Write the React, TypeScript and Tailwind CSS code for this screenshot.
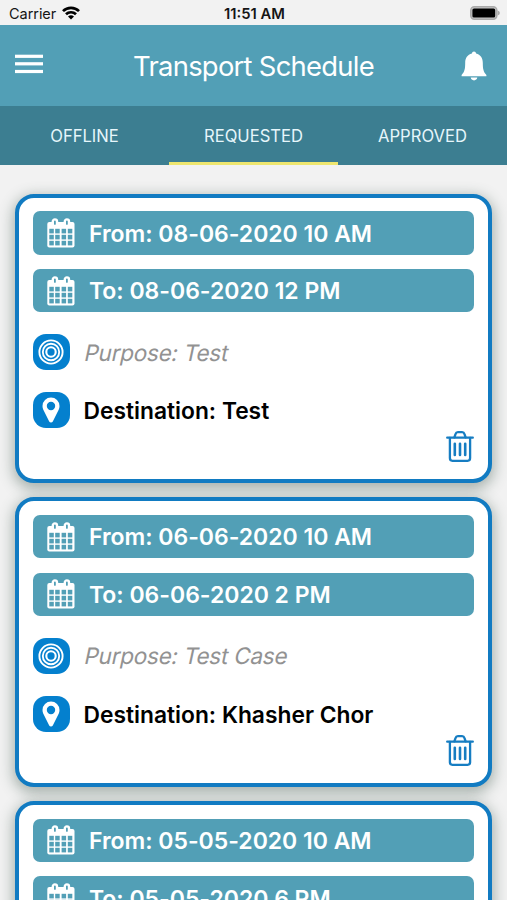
import { ReactNode } from "react";

interface Trip {
  id: number;
  from: string;
  to: string;
  purpose: string;
  destination: string;
}

const trips: Trip[] = [
  { id: 1, from: "08-06-2020 10 AM", to: "08-06-2020 12 PM", purpose: "Test", destination: "Test" },
  { id: 2, from: "06-06-2020 10 AM", to: "06-06-2020 2 PM", purpose: "Test Case", destination: "Khasher Chor" },
  { id: 3, from: "05-05-2020 10 AM", to: "05-05-2020 6 PM", purpose: "Test", destination: "Test" },
];

const tabs = ["OFFLINE", "REQUESTED", "APPROVED"];

function CalendarIcon() {
  return (
    <svg viewBox="0 0 28 30" className="h-[30px] w-7 shrink-0">
      <rect x="0.3" y="4" width="27.2" height="25.4" rx="2" fill="#fff" />
      {[10.8, 16.8, 22.8].map(y =>
        [2.3, 8.2, 14.6, 20.8].map(x => (
          <rect key={`${y}-${x}`} x={x} y={y} width="4.5" height="4.6" fill="#529fb6" />
        ))
      )}
      <rect x="5.8" y="1.4" width="4.2" height="6.6" rx="2.1" fill="#529fb6" stroke="#fff" strokeWidth="2.4" />
      <rect x="17.8" y="1.4" width="4.2" height="6.6" rx="2.1" fill="#529fb6" stroke="#fff" strokeWidth="2.4" />
    </svg>
  );
}

function TargetIcon() {
  return (
    <svg viewBox="0 0 26 26" className="size-[26px]" fill="none" stroke="#fff">
      <circle cx="13" cy="13" r="11.6" strokeWidth="1.9" />
      <circle cx="13" cy="13" r="8.2" strokeWidth="1.9" />
      <circle cx="13" cy="13" r="4.7" strokeWidth="2.1" />
    </svg>
  );
}

function PinIcon() {
  return (
    <svg viewBox="0 0 18 26" className="h-[26px] w-[18px]" fill="#fff">
      <path
        fillRule="evenodd"
        d="M9 .5a8.5 8.5 0 0 0-8.5 8.5c0 1.3.2 2.4.7 3.4l6 12a2 2 0 0 0 3.6 0l6-12c.5-1 .7-2.1.7-3.4A8.5 8.5 0 0 0 9 .5Zm0 4.3a4.2 4.2 0 1 1 0 8.4 4.2 4.2 0 0 1 0-8.4Z"
      />
    </svg>
  );
}

function TrashIcon() {
  return (
    <svg
      viewBox="0 0 28 31"
      className="h-[31px] w-7"
      fill="none"
      stroke="#167dc2"
      strokeWidth="2.3"
      strokeLinecap="round"
      strokeLinejoin="round"
    >
      <path d="M1.2 6.7h25.6" />
      <path d="M8.4 6.4 9.4 3.3Q10.1 1.2 11.9 1.2h4.2q1.8 0 2.5 2.1l1 3.1" />
      <path d="M3.9 7v20.1q0 2.7 2.5 2.7h15.2q2.5 0 2.5-2.7V7" />
      <path d="M8.8 12.8v11.2M14 12.8v11.2M19.2 12.8v11.2" strokeWidth="2.6" />
    </svg>
  );
}

function StatusBar() {
  return (
    <div className="flex h-[25px] items-center justify-between bg-[#f2f2f2] pt-[3px] pr-[7px] pl-[9px] text-[#151515]">
      <div className="flex flex-1 items-center gap-[6px]">
        <span className="text-[14.5px] tracking-[-0.05px]">Carrier</span>
        <svg viewBox="0 0 18 14" className="mb-[2px] h-[14px] w-[18px]" fill="none" stroke="#000" strokeWidth="2.7">
          <path d="M1 5.1a11.4 11.4 0 0 1 16 0" />
          <path d="M4 8.3a7.1 7.1 0 0 1 10 0" />
          <path d="M9 13.6 6 10.6a4.3 4.3 0 0 1 6 0Z" fill="#000" stroke="none" />
        </svg>
      </div>
      <span className="text-[14.8px] font-semibold">11:51 AM</span>
      <div className="flex flex-1 justify-end">
        <svg viewBox="0 0 30 14" className="mb-[3px] h-[14px] w-[30px]">
          <rect x="0.8" y="0.8" width="26" height="12.4" rx="3.6" fill="#c9c9c9" stroke="#aaa" strokeWidth="1.6" />
          <rect x="2.4" y="2.4" width="22.8" height="9.2" rx="1.6" fill="#000" />
          <path d="M27.7 4.4q2.2.9 2.2 2.6t-2.2 2.6Z" fill="#aaa" />
        </svg>
      </div>
    </div>
  );
}

function Header() {
  return (
    <header className="flex h-[81px] items-center justify-between bg-[#529fb6] pr-5 pl-[15px] text-white">
      <svg viewBox="0 0 28 20" className="mb-[3px] h-5 w-7" fill="#fff">
        <rect y="0.7" width="28" height="3.2" />
        <rect y="8.2" width="28" height="3.2" />
        <rect y="15.9" width="28" height="3.2" />
      </svg>
      <h1 className="pt-[2px] pl-[3px] text-[27.4px] tracking-[-0.73px]">Transport Schedule</h1>
      <svg viewBox="0 0 26 30" className="h-[30px] w-[26px]" fill="#fff">
        <path d="M13 .6c1.2 0 1.9.8 2.1 2 4.4 1 6.7 4.7 6.7 9.2 0 6.4.7 9.2 3.6 12.1v1.4H.6v-1.4c2.9-2.9 3.6-5.7 3.6-12.1 0-4.5 2.3-8.2 6.7-9.2.2-1.2.9-2 2.1-2Z" />
        <path d="M9.7 26.6h6.6c-.3 1.8-1.5 2.8-3.3 2.8s-3-1-3.3-2.8Z" />
      </svg>
    </header>
  );
}

function DateBar({ children }: { children: ReactNode }) {
  return (
    <div className="flex h-[43.5px] items-center gap-[14px] rounded-[7px] bg-[#529fb6] pl-[14px] text-[23px] font-semibold text-white">
      <CalendarIcon />
      <span className="pt-[2px] tracking-[-0.02px] whitespace-nowrap">{children}</span>
    </div>
  );
}

function DetailRow({ icon, children }: { icon: ReactNode; children: ReactNode }) {
  return (
    <div className="mt-[21.5px] flex h-[36.5px] items-center gap-[14px]">
      <div className="flex size-[36.5px] items-center justify-center rounded-[13px] bg-[#0480ce]">{icon}</div>
      {children}
    </div>
  );
}

function TripCard({ trip }: { trip: Trip }) {
  return (
    <div className="h-[289.5px] shrink-0 rounded-[19px] border-4 border-[#117bc2] bg-white px-[14px] pt-[13.5px] shadow-[0_4px_14px_2px_rgba(60,85,75,0.42)]">
      <div className="flex flex-col gap-[14.3px]">
        <DateBar>From: {trip.from}</DateBar>
        <DateBar>To: {trip.to}</DateBar>
      </div>
      <DetailRow icon={<TargetIcon />}>
        {/* slanted upright glyphs, the true italic has a one-storey "a" */}
        <span className="inline-block -skew-x-12 pt-px pl-px text-[22.6px] tracking-[-0.28px] text-[#929292]">
          Purpose: {trip.purpose}
        </span>
      </DetailRow>
      <DetailRow icon={<PinIcon />}>
        <span className="pt-[2px] text-[22.8px] font-semibold text-black">
          Destination: {trip.destination}
        </span>
      </DetailRow>
      <div className="mt-[3px] flex justify-end">
        <TrashIcon />
      </div>
    </div>
  );
}

export default function App() {
  return (
    <div className="flex h-[900px] w-[507px] flex-col overflow-hidden bg-[#f2f2f2] font-['Inter','Liberation_Sans',sans-serif]">
      <StatusBar />
      <Header />
      <nav className="grid h-[59px] shrink-0 grid-cols-3 bg-[#3c7e91] text-[16.6px] text-[#e6f6fb]">
        {tabs.map(tab => (
          <div
            key={tab}
            className={
              tab === "REQUESTED"
                ? "flex items-center justify-center border-b-[3px] border-[#eee66f] pt-[4px]"
                : "flex items-center justify-center pt-px"
            }
          >
            {tab}
          </div>
        ))}
      </nav>
      <main className="flex flex-1 flex-col gap-[14.3px] overflow-hidden px-[15px] pt-[28.5px]">
        {trips.map(trip => (
          <TripCard key={trip.id} trip={trip} />
        ))}
      </main>
    </div>
  );
}
